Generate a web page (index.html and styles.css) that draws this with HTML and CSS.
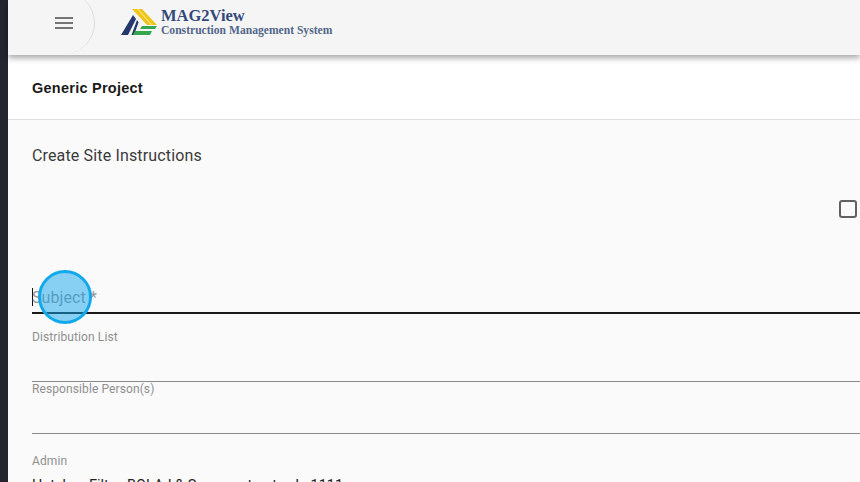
FILE: index.html
```html
<!DOCTYPE html>
<html lang="en">
<head>
    <meta charset="UTF-8">
    <meta name="viewport" content="width=device-width, initial-scale=1.0">
    <title>Create Site Instructions</title>
    <link rel="stylesheet" href="styles.css">
</head>
<body>
    <div class="sidebar-edge"></div>
    <div class="app">
        <header class="topbar">
            <button class="menu-button" type="button" aria-label="Menu">
                <svg width="18" height="12" viewBox="0 0 18 12"><path d="M0 0h18v2H0zM0 5h18v2H0zM0 10h18v2H0z" fill="#757575"/></svg>
            </button>
            <div class="brand">
                <svg class="brand-logo" width="38" height="28" viewBox="0 0 38 28">
                    <path d="M12 1h10l15 16H27z" fill="#f0c419"/>
                    <path d="M17 1h1.500l14 16H31z" fill="#f6e27a"/>
                    <path d="M13 7l3 4-8 16H1z" fill="#25386b"/>
                    <path d="M17 12l1.500 2.500L14 27h-2.500z" fill="#25386b"/>
                    <path d="M22 18h15l-2 3H20z" fill="#35a84f"/>
                    <path d="M15 23h17l-2 4H13z" fill="#35a84f"/>
                </svg>
                <div class="brand-text">
                    <div class="brand-name">MAG2View</div>
                    <div class="brand-sub">Construction Management System</div>
                </div>
            </div>
        </header>

        <div class="project-bar">Generic Project</div>

        <main class="content">
            <h1 class="page-title">Create Site Instructions</h1>

            <div class="checkbox-row"><span class="checkbox"></span></div>

            <div class="field field-subject">
                <span class="caret"></span>
                <label class="subject-label">Subject *</label>
                <span class="click-marker"></span>
            </div>

            <div class="field field-distribution">
                <label class="small-label">Distribution List</label>
            </div>

            <div class="field field-responsible">
                <label class="small-label">Responsible Person(s)</label>
            </div>

            <div class="field-admin">
                <label class="small-label">Admin</label>
                <div class="admin-value">Hatchez Filter, BOLAJ &amp; Sons contracts, Ja 1111</div>
            </div>
        </main>
    </div>
</body>
</html>
```
FILE: styles.css
```css
* {
    margin: 0;
    padding: 0;
    box-sizing: border-box;
}

html,
body {
    height: 482px;
    overflow: hidden;
}

body {
    display: flex;
    font-family: 'Roboto', 'Liberation Sans', sans-serif;
    background: #fafafa;
}

.sidebar-edge {
    width: 8px;
    flex-shrink: 0;
    background: #23252f;
}

.app {
    flex: 1;
    min-width: 0;
}

.topbar {
    position: relative;
    z-index: 2;
    display: flex;
    height: 55px;
    background: #f5f5f5;
    box-shadow: 0 3px 6px rgba(0, 0, 0, 0.35);
}

.menu-button {
    display: flex;
    flex-shrink: 0;
    align-items: center;
    justify-content: center;
    width: 62px;
    height: 62px;
    margin: -8px 0 0 25px;
    border: none;
    border-right: 1px solid #dcdcdc;
    border-radius: 50%;
    background: #f5f5f5;
}

.brand {
    display: flex;
    align-items: flex-start;
    gap: 3px;
    margin-left: 25px;
    padding-top: 8px;
}

.brand-name {
    font-family: 'Liberation Serif', serif;
    font-size: 16.5px;
    font-weight: 700;
    line-height: 16px;
    color: #34497a;
}

.brand-sub {
    font-family: 'Liberation Serif', serif;
    font-size: 11.6px;
    font-weight: 700;
    line-height: 13px;
    color: #52678a;
}

.project-bar {
    display: flex;
    align-items: center;
    height: 65px;
    padding: 2px 0 0 24px;
    background: #ffffff;
    border-bottom: 1px solid #e0e0e0;
    font-family: 'Liberation Sans', sans-serif;
    font-size: 14.5px;
    font-weight: 700;
    letter-spacing: 0.25px;
    color: #1a1a1a;
}

.content {
    padding: 0 0 0 24px;
}

.page-title {
    padding-top: 26px;
    font-size: 16px;
    font-weight: 400;
    line-height: 19px;
    letter-spacing: 0.15px;
    color: #3a3a3a;
}

.checkbox-row {
    display: flex;
    justify-content: flex-end;
    padding-top: 35px;
    padding-right: 3px;
}

.checkbox {
    width: 18px;
    height: 18px;
    border: 2px solid #616161;
    border-radius: 3px;
}

.field {
    position: relative;
    border-bottom: 1px solid #8a8a8a;
}

.field-subject {
    height: 46px;
    margin-top: 50px;
    border-bottom: 2px solid #1a1a1a;
}

.caret {
    position: absolute;
    left: 0;
    top: 20px;
    width: 1px;
    height: 18px;
    background: #111111;
}

.subject-label {
    position: absolute;
    left: 0;
    top: 21px;
    font-size: 16px;
    letter-spacing: 0.1px;
    line-height: 18px;
    color: #969696;
}

.click-marker {
    position: absolute;
    left: 6px;
    top: 2px;
    width: 54px;
    height: 54px;
    border: 3px solid #12a8ec;
    border-radius: 50%;
    background: rgba(20, 165, 235, 0.5);
}

.small-label {
    display: block;
    font-size: 12px;
    letter-spacing: 0.1px;
    line-height: 14px;
    color: #8f8f8f;
}

.field-distribution {
    height: 68px;
    padding-top: 16px;
}

.field-responsible {
    height: 52px;
}

.field-admin {
    padding-top: 20px;
}

.admin-value {
    margin-top: 7px;
    font-size: 14.5px;
    line-height: 22px;
    white-space: nowrap;
    color: #222222;
}
```
